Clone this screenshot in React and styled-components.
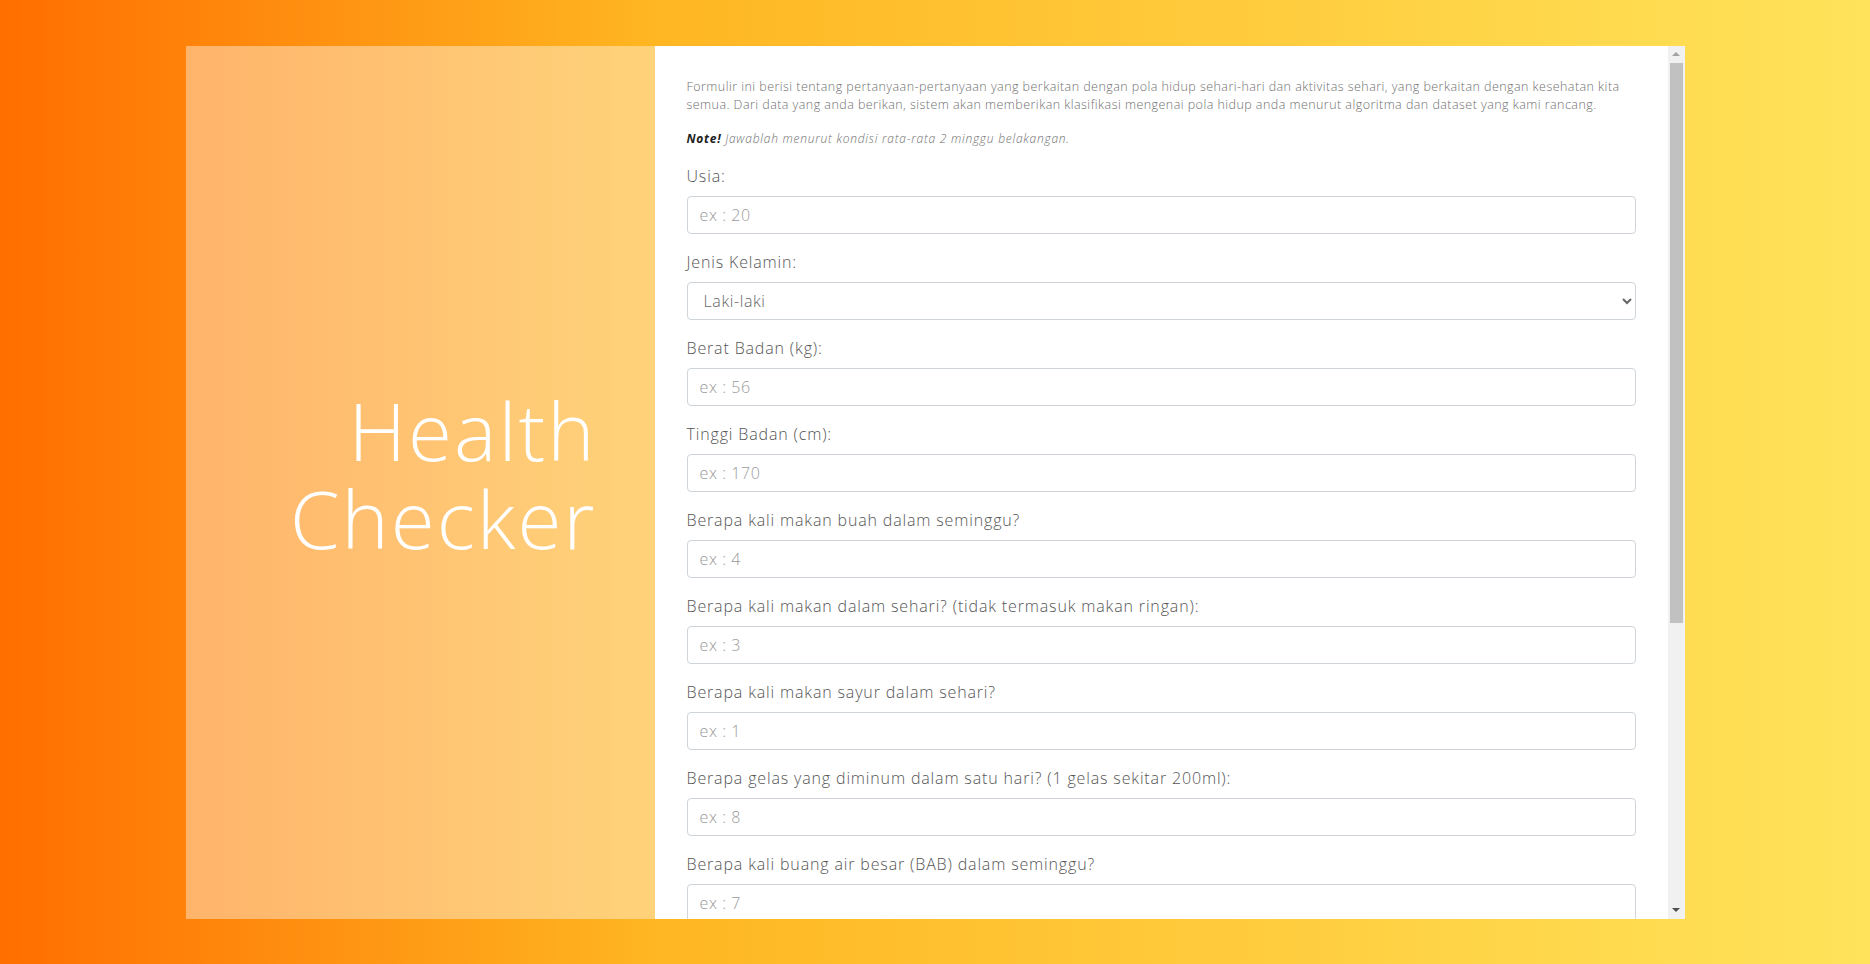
import React, { useState } from 'react';
import styled, { createGlobalStyle } from 'styled-components';

const GlobalStyle = createGlobalStyle`
    * {
        box-sizing: border-box;
    }
    html,
    body {
        margin: 0;
        padding: 0;
        height: 100%;
    }
    body {
        font-family: 'Open Sans', 'Noto Sans', sans-serif;
        background: linear-gradient(to right, #ff6e00 0%, #ffb622 35%, #ffe35a 100%);
        overflow: hidden;
    }
`;

const questions = [
    { id: 'usia', label: 'Usia:', placeholder: 'ex : 20' },
    { id: 'gender', label: 'Jenis Kelamin:', options: ['Laki-laki', 'Perempuan'] },
    { id: 'berat', label: 'Berat Badan (kg):', placeholder: 'ex : 56' },
    { id: 'tinggi', label: 'Tinggi Badan (cm):', placeholder: 'ex : 170' },
    { id: 'buah', label: 'Berapa kali makan buah dalam seminggu?', placeholder: 'ex : 4' },
    { id: 'makan', label: 'Berapa kali makan dalam sehari? (tidak termasuk makan ringan):', placeholder: 'ex : 3' },
    { id: 'sayur', label: 'Berapa kali makan sayur dalam sehari?', placeholder: 'ex : 1' },
    { id: 'minum', label: 'Berapa gelas yang diminum dalam satu hari? (1 gelas sekitar 200ml):', placeholder: 'ex : 8' },
    { id: 'bab', label: 'Berapa kali buang air besar (BAB) dalam seminggu?', placeholder: 'ex : 7' },
    { id: 'tidur', label: 'Berapa jam tidur dalam sehari?', placeholder: 'ex : 7' },
    { id: 'olahraga', label: 'Berapa kali olahraga dalam seminggu?', placeholder: 'ex : 3' },
    { id: 'rokok', label: 'Berapa batang rokok dalam sehari?', placeholder: 'ex : 0' },
    { id: 'layar', label: 'Berapa jam menatap layar dalam sehari?', placeholder: 'ex : 6' },
];

const App = () => {
    const [values, setValues] = useState({ gender: 'Laki-laki' });

    const onChangeHandler = e => {
        setValues({ ...values, [e.target.name]: e.target.value });
    };

    const handleSubmit = e => {
        e.preventDefault();
    };

    return (
        <>
            <GlobalStyle />
            <Page>
                <Card>
                    <Side>
                        <Title>
                            <span>Health</span>
                            <span>Checker</span>
                        </Title>
                    </Side>
                    <Main>
                        <FormArea>
                            <Intro>
                                Formulir ini berisi tentang pertanyaan-pertanyaan yang berkaitan dengan pola hidup
                                sehari-hari dan aktivitas sehari, yang berkaitan dengan kesehatan kita
                                <br />
                                semua. Dari data yang anda berikan, sistem akan memberikan klasifikasi mengenai pola
                                hidup anda menurut algoritma dan dataset yang kami rancang.
                            </Intro>
                            <Note>
                                <strong>Note!</strong> Jawablah menurut kondisi rata-rata 2 minggu belakangan.
                            </Note>
                            <form onSubmit={handleSubmit}>
                                {questions.map(q => (
                                    <FormGroup key={q.id}>
                                        <Label htmlFor={q.id}>{q.label}</Label>
                                        {q.options ? (
                                            <Select
                                                id={q.id}
                                                name={q.id}
                                                value={values[q.id]}
                                                onChange={onChangeHandler}
                                            >
                                                {q.options.map(o => (
                                                    <option key={o}>{o}</option>
                                                ))}
                                            </Select>
                                        ) : (
                                            <Input
                                                type="number"
                                                id={q.id}
                                                name={q.id}
                                                placeholder={q.placeholder}
                                                value={values[q.id] || ''}
                                                onChange={onChangeHandler}
                                            />
                                        )}
                                    </FormGroup>
                                ))}
                                <SubmitButton type="submit">Periksa</SubmitButton>
                            </form>
                        </FormArea>
                        <ScrollTrack>
                            <ArrowButton>
                                <Arrow dir="up" />
                            </ArrowButton>
                            <Thumb />
                            <ArrowButton>
                                <Arrow dir="down" />
                            </ArrowButton>
                        </ScrollTrack>
                    </Main>
                </Card>
            </Page>
        </>
    );
};

const Page = styled.div`
    display: flex;
    align-items: center;
    justify-content: center;
    width: 100vw;
    height: 100vh;
`;

const Card = styled.div`
    display: flex;
    width: 1499px;
    height: 873px;
`;

const Side = styled.div`
    display: flex;
    align-items: center;
    justify-content: flex-end;
    flex: 0 0 469px;
    padding-right: 58px;
    background: rgba(255, 255, 255, 0.4);
`;

const Title = styled.h1`
    display: flex;
    flex-direction: column;
    align-items: flex-end;
    margin: 0 0 16px;
    font-size: 80px;
    font-weight: 300;
    line-height: 88px;
    letter-spacing: 2px;
    color: #fff;
    text-align: right;
`;

const Main = styled.div`
    display: flex;
    flex: 1;
    min-width: 0;
    background: #fff;
`;

const FormArea = styled.div`
    flex: 1;
    min-width: 0;
    padding: 32px;
    overflow-y: auto;
    scrollbar-width: none;
    &::-webkit-scrollbar {
        display: none;
    }
`;

const ScrollTrack = styled.div`
    display: flex;
    flex-direction: column;
    flex: 0 0 17px;
    background: #f1f1f1;
`;

const ArrowButton = styled.div`
    display: flex;
    align-items: center;
    justify-content: center;
    height: 17px;
`;

const Arrow = styled.span`
    width: 0;
    height: 0;
    border-left: 4px solid transparent;
    border-right: 4px solid transparent;
    border-bottom: ${p => (p.dir === 'up' ? '4px solid #a3a3a3' : '0')};
    border-top: ${p => (p.dir === 'down' ? '4px solid #505050' : '0')};
`;

const Thumb = styled.div`
    height: 560px;
    margin: 0 2px auto;
    background: #c1c1c1;
`;

const Intro = styled.p`
    margin: 0 0 16px;
    font-size: 12.5px;
    line-height: 18px;
    font-weight: 300;
    letter-spacing: 0.45px;
    white-space: nowrap;
    color: #707070;
`;

const Note = styled.p`
    margin: 0 0 16px;
    font-size: 12px;
    line-height: 18px;
    font-weight: 300;
    font-style: italic;
    letter-spacing: 0.75px;
    color: #707070;
    strong {
        font-weight: 700;
        color: #222;
    }
`;

const FormGroup = styled.div`
    margin-bottom: 16px;
`;

const Label = styled.label`
    display: block;
    margin-bottom: 8px;
    font-size: 16px;
    line-height: 24px;
    font-weight: 300;
    letter-spacing: 0.85px;
    color: #555;
`;

const Input = styled.input`
    display: block;
    width: 100%;
    height: 38px;
    padding: 6px 12px;
    border: 1px solid #ced4da;
    border-radius: 4px;
    background: #fff;
    font-family: inherit;
    font-size: 16px;
    font-weight: 300;
    letter-spacing: 0.6px;
    color: #495057;
    outline: none;
    appearance: textfield;
    &::placeholder {
        color: #9a9a9a;
    }
    &::-webkit-outer-spin-button,
    &::-webkit-inner-spin-button {
        -webkit-appearance: none;
        margin: 0;
    }
`;

const Select = styled.select`
    display: block;
    width: 100%;
    height: 38px;
    padding: 6px 12px;
    border: 1px solid #ced4da;
    border-radius: 4px;
    background: #fff;
    font-family: inherit;
    font-size: 16px;
    font-weight: 300;
    letter-spacing: 0.6px;
    color: #666;
    outline: none;
`;

const SubmitButton = styled.button`
    display: block;
    height: 38px;
    padding: 6px 24px;
    border: 0;
    border-radius: 4px;
    background: #ff9a1f;
    font-family: inherit;
    font-size: 16px;
    color: #fff;
    cursor: pointer;
`;

export default App;
